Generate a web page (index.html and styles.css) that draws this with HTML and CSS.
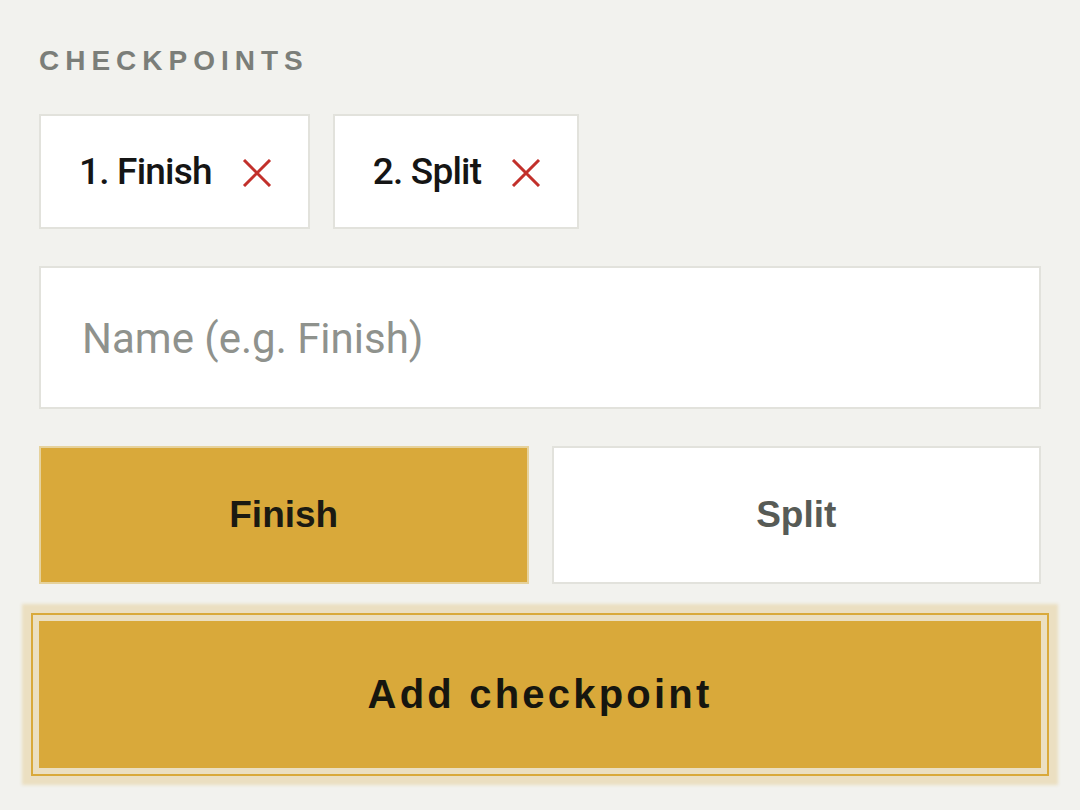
FILE: index.html
```html
<!DOCTYPE html>
<html lang="en">
<head>
  <meta charset="UTF-8">
  <meta name="viewport" content="width=device-width, initial-scale=1.0">
  <title>Checkpoints</title>
  <link rel="stylesheet" href="styles.css">
</head>
<body>

<div class="panel">
  <div class="label">Checkpoints</div>

  <!-- daftar checkpoint -->
  <div class="chips">
    <div class="chip">
      <span>1. Finish</span>
      <svg class="remove" width="30" height="28" viewBox="0 0 30 28"><path d="M2 1 L28 27 M28 1 L2 27" stroke="#c2302b" stroke-width="3" fill="none"/></svg>
    </div>
    <div class="chip">
      <span>2. Split</span>
      <svg class="remove" width="30" height="28" viewBox="0 0 30 28"><path d="M2 1 L28 27 M28 1 L2 27" stroke="#c2302b" stroke-width="3" fill="none"/></svg>
    </div>
  </div>

  <input class="name" type="text" placeholder="Name (e.g. Finish)">

  <div class="modes">
    <button class="mode active">Finish</button>
    <button class="mode">Split</button>
  </div>

  <button class="add">Add checkpoint</button>
</div>

</body>
</html>
```

FILE: styles.css
```css
* {
  box-sizing: border-box;
}
html, body {
  margin: 0;
  min-height: 100%;
  background-color: #f2f2ee;
  font-family: "Liberation Sans", Arial, sans-serif;
}
.panel {
  padding: 45px 39px 40px 39px;
  display: flex;
  flex-direction: column;
  gap: 37px;
}
.label {
  font-size: 28px;
  line-height: 32px;
  font-weight: bold;
  letter-spacing: 6px;
  text-transform: uppercase;
  color: #7b7e79;
}
.chips {
  display: flex;
  gap: 23px;
}
.chip {
  height: 115px;
  display: flex;
  align-items: center;
  gap: 30px;
  padding: 0 36px 0 38px;
  background-color: #fff;
  border: 2px solid #e2e2dc;
  font-family: Roboto, "Liberation Sans", sans-serif;
  font-weight: 500;
  font-size: 37px;
  letter-spacing: -0.8px;
  color: #151515;
}
.remove {
  display: block;
  margin-top: 3px;
}
.name {
  height: 143px;
  width: 100%;
  margin: 0;
  padding: 2px 0 0 41px;
  background-color: #fff;
  border: 2px solid #e2e2dc;
  font-family: Roboto, "Liberation Sans", sans-serif;
  font-size: 42px;
  color: #222;
  outline: none;
}
.name::placeholder {
  color: #8f928d;
}
.modes {
  display: grid;
  grid-template-columns: 1fr 1fr;
  gap: 23px;
}
.mode {
  height: 138px;
  margin: 0;
  background-color: #fff;
  border: 2px solid #e2e2dc;
  font-family: "Liberation Sans", Arial, sans-serif;
  font-weight: bold;
  font-size: 37px;
  color: #575b56;
  cursor: pointer;
}
.mode.active {
  background-color: #d9a93a;
  border-color: #e6d29c;
  color: #1b1a12;
}
.add {
  height: 147px;
  margin: 0;
  background-color: #d9a93a;
  border: none;
  outline: 2px solid #d9a93a;
  outline-offset: 6px;
  box-shadow: 0 0 3px 17px rgba(217, 169, 58, 0.25);
  font-family: "Liberation Sans", Arial, sans-serif;
  font-weight: bold;
  font-size: 40px;
  letter-spacing: 3.2px;
  color: #16160f;
  cursor: pointer;
}
```
